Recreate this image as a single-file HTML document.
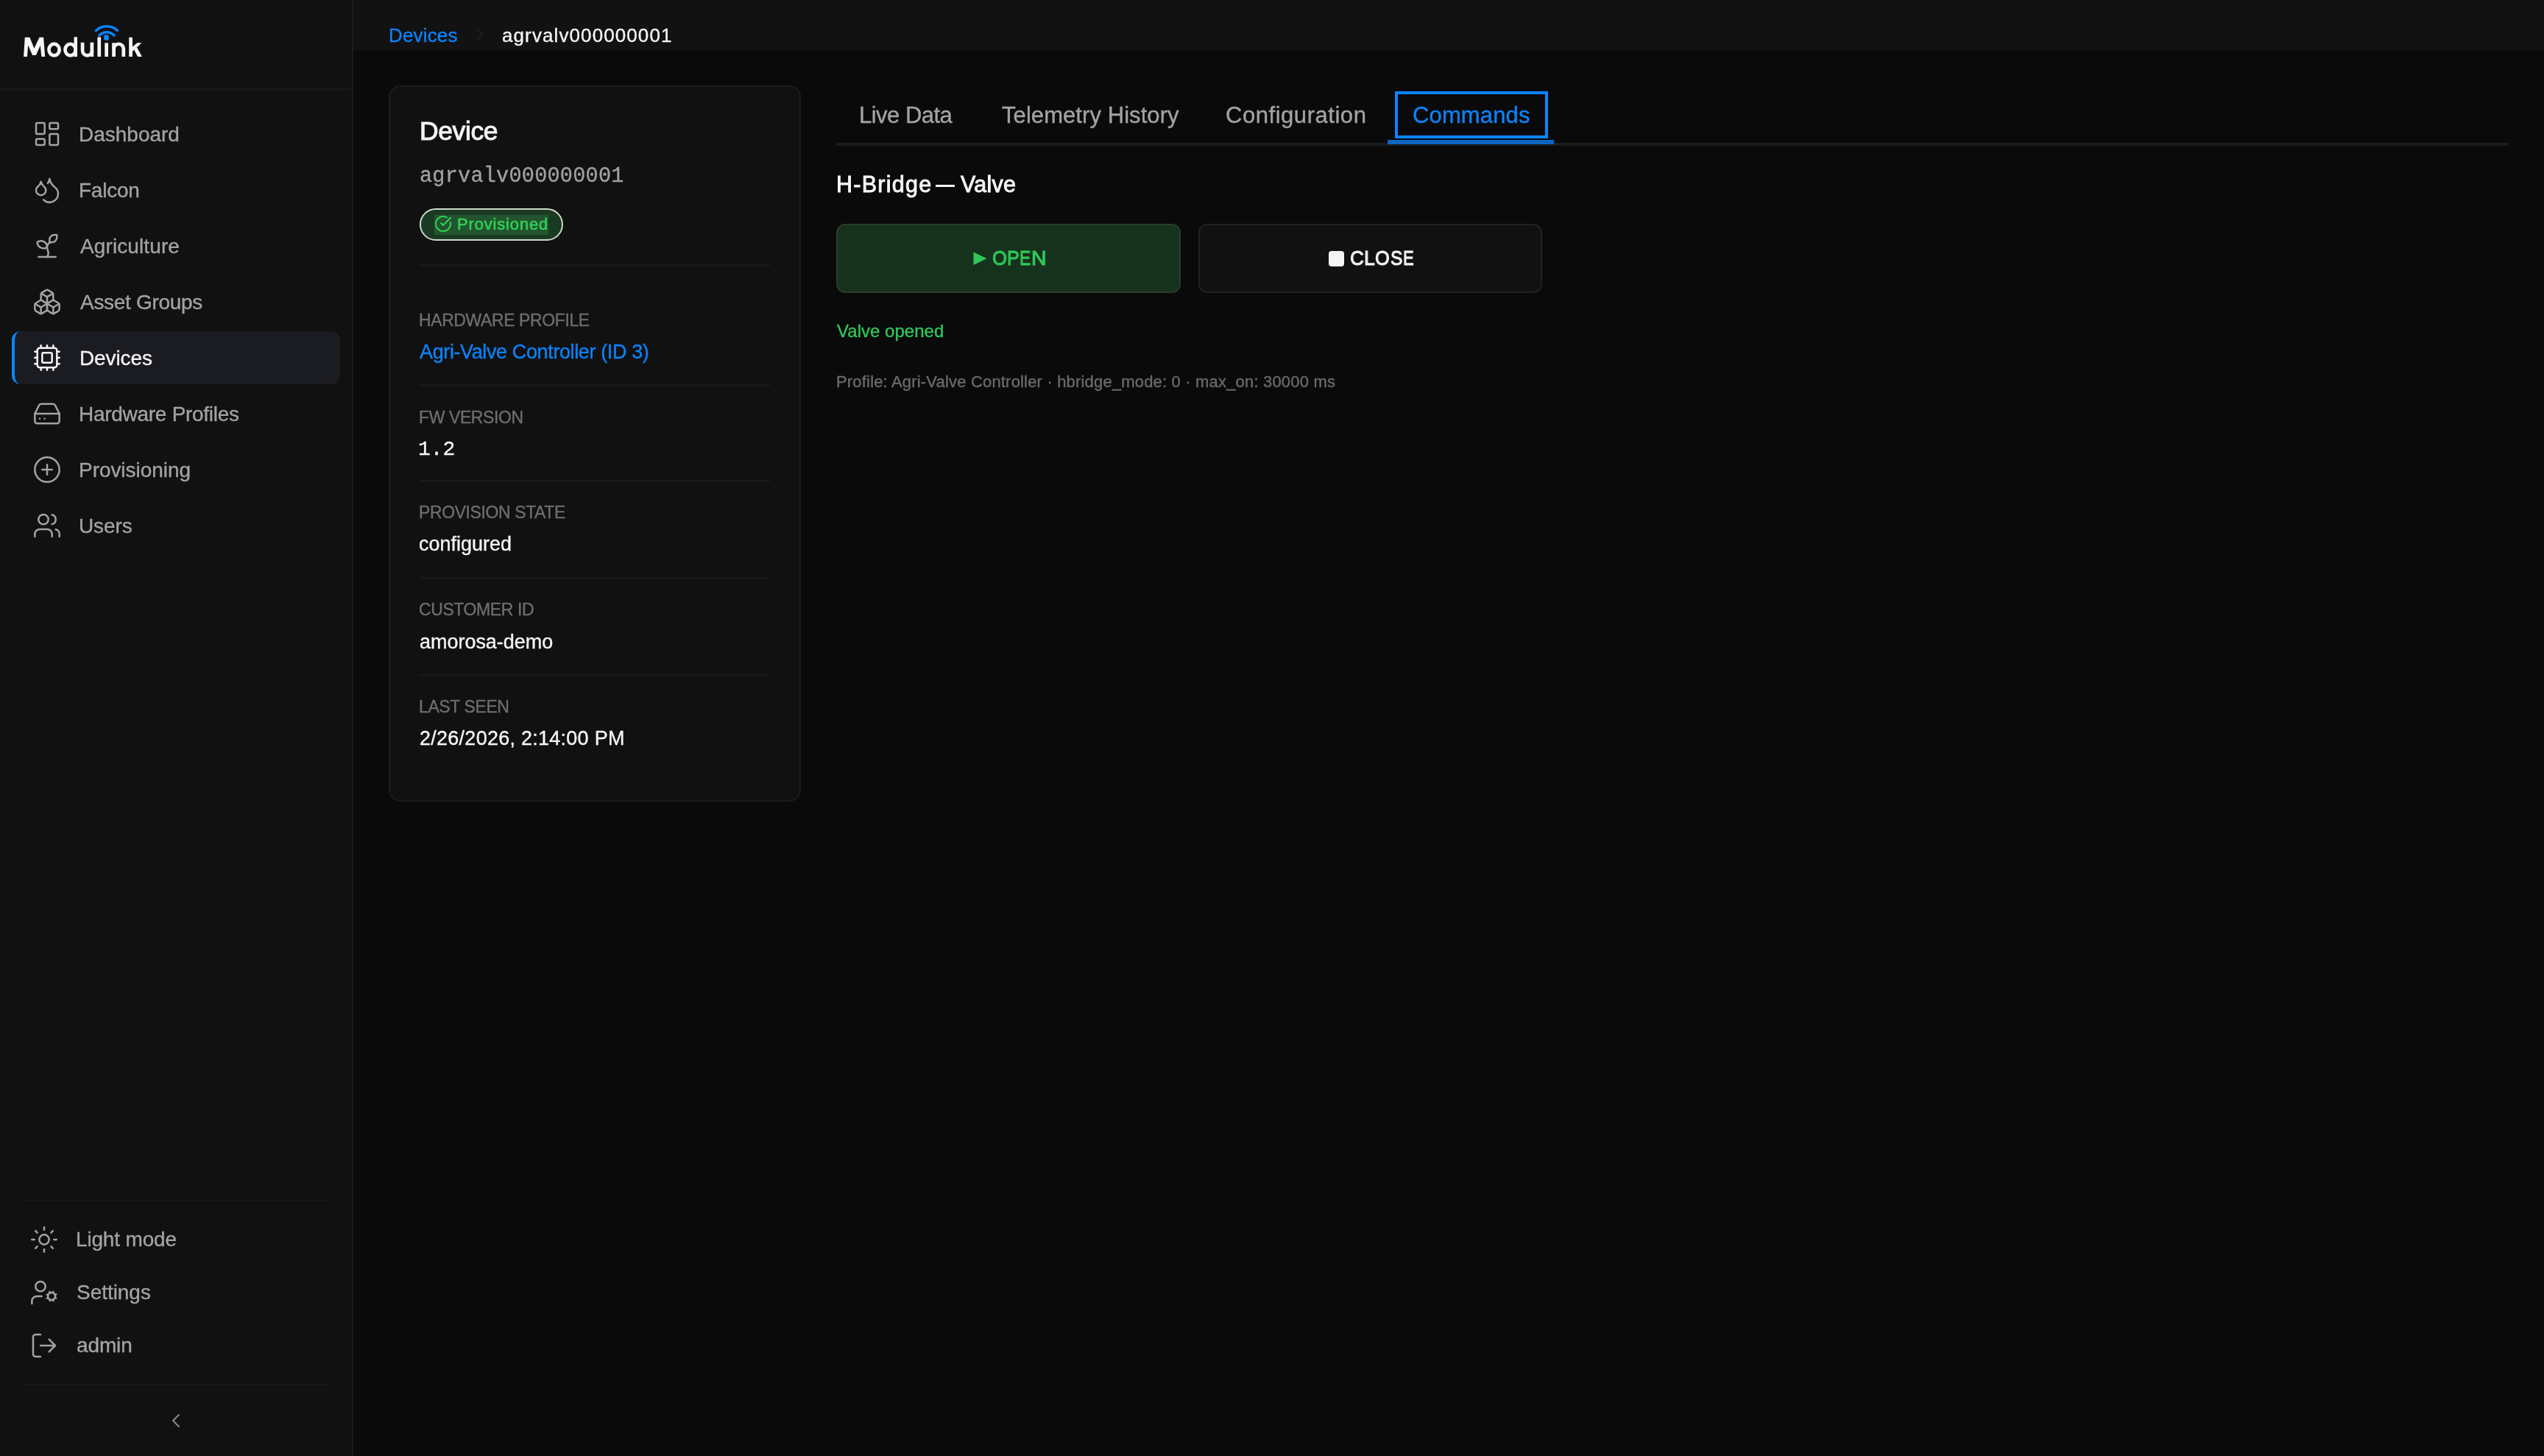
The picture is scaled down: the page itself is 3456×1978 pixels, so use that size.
<!DOCTYPE html>
<html><head><meta charset="utf-8">
<style>
*{box-sizing:border-box;margin:0;padding:0}
html,body{width:3456px;height:1978px;overflow:hidden;background:#0a0a0a;font-family:"Liberation Sans",sans-serif}
.abs{position:absolute}
.t{position:absolute;white-space:nowrap;line-height:1;will-change:transform;-webkit-text-stroke:0.35px currentColor}
</style></head>
<body>
<div id="root" style="position:absolute;left:0;top:0;width:3456px;height:1978px;overflow:hidden;background:#0a0a0a">
<div class="abs" style="left:0px;top:0px;width:478px;height:1978px;background:#111111;"></div>
<div class="abs" style="left:478px;top:0px;width:2px;height:1978px;background:#191b1f;"></div>
<div class="abs" style="left:480px;top:0px;width:2976px;height:68px;background:#121212;"></div>
<svg class="abs" style="left:0;top:0" width="220" height="100" viewBox="0 0 220 100"><g fill="#f5f5f5"><polygon points="32.1,77 33.8,50.8 40.4,50.8 46.4,65.8 53.5,50.8 59.1,50.8 61.2,77 56.3,77 54.8,61.8 48.9,75.1 44.1,75.1 38.1,61.6 37,77"/><rect x="100.5" y="50.3" width="4.5" height="26.8"/><rect x="132.4" y="50.5" width="4.7" height="26.5"/><rect x="142.3" y="58.3" width="4.7" height="18.7"/><rect x="152.2" y="58.3" width="4.8" height="18.7"/><rect x="175.2" y="50.8" width="4.8" height="26.2"/><polygon points="179.5,64 186.3,58.3 192.6,58.3 179.5,70.3"/><polygon points="182.2,67.6 185.8,63.9 193,77 187,77"/></g><g fill="none" stroke="#f5f5f5" stroke-width="4.7"><ellipse cx="73.55" cy="67.55" rx="7.1" ry="7.85"/><ellipse cx="95.6" cy="67.6" rx="7.1" ry="7.85"/><path d="M112.1 57.7 V68.9 A6.4 6.4 0 0 0 124.9 68.9"/><path d="M124.9 57.7 V77"/><path d="M154.6 66.5 A6.6 6.75 0 0 1 167.8 66.5 V77"/></g></svg>
<svg class="abs" style="left:124px;top:31.8px" width="42" height="32" viewBox="0 0 42 32" fill="none" stroke="#0a84ff" stroke-width="3.5" stroke-linecap="round"><path d="M6.5 9.5 A 21 21 0 0 1 35.5 9.5"/><path d="M11 16 A 14 14 0 0 1 31 16"/></svg>
<div class="abs" style="left:140.7px;top:47.3px;width:7.8px;height:7.8px;background:#0a84ff;border-radius:50%"></div>
<div class="abs" style="left:0px;top:120px;width:478px;height:2px;background:#17191c;"></div>
<svg class="abs" style="left:44.0px;top:162.0px" width="40" height="40" viewBox="0 0 24 24" fill="none" stroke="#a3a3a3" stroke-width="1.5" stroke-linecap="round" stroke-linejoin="round"><rect width="7" height="9" x="3" y="3" rx="1"/><rect width="7" height="5" x="14" y="3" rx="1"/><rect width="7" height="9" x="14" y="12" rx="1"/><rect width="7" height="5" x="3" y="16" rx="1"/></svg>
<div class="t" style="left:107.0px;top:168.7px;font-size:28px;color:#a3a3a3;font-weight:normal;font-family:'Liberation Sans';letter-spacing:-0.01px;">Dashboard</div>
<svg class="abs" style="left:44.0px;top:238.0px" width="40" height="40" viewBox="0 0 24 24" fill="none" stroke="#a3a3a3" stroke-width="1.5" stroke-linecap="round" stroke-linejoin="round"><path d="M7 16.3c2.2 0 4-1.83 4-4.05 0-1.16-.57-2.26-1.71-3.19S7.29 6.75 7 5.3c-.29 1.45-1.14 2.84-2.290 3.76S3 11.1 3 12.25c0 2.22 1.8 4.05 4 4.05z"/><path d="M12.56 6.6A10.97 10.97 0 0 0 14 3.02c.5 2.5 2 4.9 4 6.5s3 3.5 3 5.5a6.98 6.98 0 0 1-11.91 4.97"/></svg>
<div class="t" style="left:107.0px;top:244.7px;font-size:28px;color:#a3a3a3;font-weight:normal;font-family:'Liberation Sans';letter-spacing:-0.25px;">Falcon</div>
<svg class="abs" style="left:44.0px;top:314.0px" width="40" height="40" viewBox="0 0 24 24" fill="none" stroke="#a3a3a3" stroke-width="1.5" stroke-linecap="round" stroke-linejoin="round"><path d="M14 9.536V7a4 4 0 0 1 4-4h1.5a.5.5 0 0 1 .5.5V5a4 4 0 0 1-4 4 4 4 0 0 0-4 4c0 2 1 3 1 5a5 5 0 0 1-1 3"/><path d="M4 9a5 5 0 0 1 8 4 5 5 0 0 1-8-4"/><path d="M5 21h14"/></svg>
<div class="t" style="left:108.5px;top:320.7px;font-size:28px;color:#a3a3a3;font-weight:normal;font-family:'Liberation Sans';letter-spacing:0.11px;">Agriculture</div>
<svg class="abs" style="left:44.0px;top:390.0px" width="40" height="40" viewBox="0 0 24 24" fill="none" stroke="#a3a3a3" stroke-width="1.5" stroke-linecap="round" stroke-linejoin="round"><path d="M2.97 12.92A2 2 0 0 0 2 14.63v3.24a2 2 0 0 0 .97 1.71l3 1.8a2 2 0 0 0 2.06 0L12 19v-5.5l-5-3-4.03 2.42Z"/><path d="m7 16.5-4.74-2.85"/><path d="m7 16.5 5-3"/><path d="M7 16.5v5.17"/><path d="M12 13.5V19l3.97 2.38a2 2 0 0 0 2.06 0l3-1.8a2 2 0 0 0 .97-1.71v-3.24a2 2 0 0 0-.97-1.71L17 10.5l-5 3Z"/><path d="m17 16.5-5-3"/><path d="m17 16.5 4.74-2.85"/><path d="M17 16.5v5.17"/><path d="M7.97 4.42A2 2 0 0 0 7 6.13v4.37l5 3 5-3V6.13a2 2 0 0 0-.97-1.71l-3-1.8a2 2 0 0 0-2.06 0l-3 1.8Z"/><path d="M12 8 7.26 5.150"/><path d="m12 8 4.74-2.85"/><path d="M12 13.5V8"/></svg>
<div class="t" style="left:108.5px;top:396.7px;font-size:28px;color:#a3a3a3;font-weight:normal;font-family:'Liberation Sans';letter-spacing:-0.30px;">Asset Groups</div>
<div class="abs" style="left:16px;top:450px;width:446px;height:72px;background:#1a1c21;border-radius:12px;border-left:4px solid #0a84ff"></div>
<svg class="abs" style="left:44.0px;top:466.0px" width="40" height="40" viewBox="0 0 24 24" fill="none" stroke="#f5f5f5" stroke-width="1.5" stroke-linecap="round" stroke-linejoin="round"><rect width="16" height="16" x="4" y="4" rx="2"/><rect width="8" height="8" x="8" y="8" rx="1"/><path d="M12 2v2"/><path d="M12 20v2"/><path d="M7 2v2"/><path d="M17 2v2"/><path d="M7 20v2"/><path d="M17 20v2"/><path d="M2 12h2"/><path d="M2 7h2"/><path d="M2 17h2"/><path d="M20 12h2"/><path d="M20 7h2"/><path d="M20 17h2"/></svg>
<div class="t" style="left:107.5px;top:472.7px;font-size:28px;color:#f5f5f5;font-weight:normal;font-family:'Liberation Sans';letter-spacing:-0.10px;">Devices</div>
<svg class="abs" style="left:44.0px;top:542.0px" width="40" height="40" viewBox="0 0 24 24" fill="none" stroke="#a3a3a3" stroke-width="1.5" stroke-linecap="round" stroke-linejoin="round"><line x1="22" x2="2" y1="12" y2="12"/><path d="M5.45 5.11 2 12v6a2 2 0 0 0 2 2h16a2 2 0 0 0 2-2v-6l-3.45-6.89A2 2 0 0 0 16.76 4H7.24a2 2 0 0 0-1.79 1.11z"/><line x1="6" x2="6.01" y1="16" y2="16"/><line x1="10" x2="10.01" y1="16" y2="16"/></svg>
<div class="t" style="left:107.0px;top:548.7px;font-size:28px;color:#a3a3a3;font-weight:normal;font-family:'Liberation Sans';letter-spacing:-0.28px;">Hardware Profiles</div>
<svg class="abs" style="left:44.0px;top:618.0px" width="40" height="40" viewBox="0 0 24 24" fill="none" stroke="#a3a3a3" stroke-width="1.5" stroke-linecap="round" stroke-linejoin="round"><circle cx="12" cy="12" r="10"/><path d="M8 12h8"/><path d="M12 8v8"/></svg>
<div class="t" style="left:107.0px;top:624.7px;font-size:28px;color:#a3a3a3;font-weight:normal;font-family:'Liberation Sans';letter-spacing:-0.05px;">Provisioning</div>
<svg class="abs" style="left:44.0px;top:694.0px" width="40" height="40" viewBox="0 0 24 24" fill="none" stroke="#a3a3a3" stroke-width="1.5" stroke-linecap="round" stroke-linejoin="round"><path d="M16 21v-2a4 4 0 0 0-4-4H6a4 4 0 0 0-4 4v2"/><circle cx="9" cy="7" r="4"/><path d="M22 21v-2a4 4 0 0 0-3-3.87"/><path d="M16 3.13a4 4 0 0 1 0 7.75"/></svg>
<div class="t" style="left:107.3px;top:700.7px;font-size:28px;color:#a3a3a3;font-weight:normal;font-family:'Liberation Sans';letter-spacing:-0.10px;">Users</div>
<div class="abs" style="left:32px;top:1630px;width:414px;height:2px;background:#17191c;"></div>
<svg class="abs" style="left:40.0px;top:1664.0px" width="40" height="40" viewBox="0 0 24 24" fill="none" stroke="#a3a3a3" stroke-width="1.5" stroke-linecap="round" stroke-linejoin="round"><circle cx="12" cy="12" r="4"/><path d="M12 2v2"/><path d="M12 20v2"/><path d="m4.93 4.93 1.41 1.41"/><path d="m17.66 17.66 1.41 1.41"/><path d="M2 12h2"/><path d="M20 12h2"/><path d="m6.34 17.66-1.41 1.41"/><path d="m19.07 4.93-1.41 1.41"/></svg>
<div class="t" style="left:102.8px;top:1669.8px;font-size:28px;color:#a3a3a3;font-weight:normal;font-family:'Liberation Sans';letter-spacing:-0.17px;">Light mode</div>
<svg class="abs" style="left:40.0px;top:1736.0px" width="40" height="40" viewBox="0 0 24 24" fill="none" stroke="#a3a3a3" stroke-width="1.5" stroke-linecap="round" stroke-linejoin="round"><circle cx="18" cy="15" r="3"/><circle cx="9" cy="7" r="4"/><path d="M10 15H6a4 4 0 0 0-4 4v2"/><path d="m21.7 16.4-.9-.3"/><path d="m15.2 13.9-.9-.3"/><path d="m16.6 18.7.3-.9"/><path d="m19.1 12.2.3-.9"/><path d="m19.6 18.7-.4-1"/><path d="m16.8 12.3-.4-1"/><path d="m14.3 16.6 1-.4"/><path d="m20.7 13.8 1-.4"/></svg>
<div class="t" style="left:103.8px;top:1741.8px;font-size:28px;color:#a3a3a3;font-weight:normal;font-family:'Liberation Sans';letter-spacing:-0.04px;">Settings</div>
<svg class="abs" style="left:40.0px;top:1808.0px" width="40" height="40" viewBox="0 0 24 24" fill="none" stroke="#a3a3a3" stroke-width="1.5" stroke-linecap="round" stroke-linejoin="round"><path d="M9 21H5a2 2 0 0 1-2-2V5a2 2 0 0 1 2-2h4"/><polyline points="16 17 21 12 16 7"/><line x1="21" x2="9" y1="12" y2="12"/></svg>
<div class="t" style="left:103.8px;top:1813.8px;font-size:28px;color:#a3a3a3;font-weight:normal;font-family:'Liberation Sans';letter-spacing:-0.12px;">admin</div>
<div class="abs" style="left:32px;top:1880px;width:414px;height:2px;background:#17191c;"></div>
<svg class="abs" style="left:223.0px;top:1914.0px" width="32" height="32" viewBox="0 0 24 24" fill="none" stroke="#8a8a8a" stroke-width="1.5" stroke-linecap="round" stroke-linejoin="round"><path d="m15 18-6-6 6-6"/></svg>
<div class="t" style="left:527.5px;top:34.5px;font-size:26px;color:#0a84ff;font-weight:normal;font-family:'Liberation Sans';letter-spacing:0.17px;">Devices</div>
<svg class="abs" style="left:638.0px;top:33.0px" width="28" height="28" viewBox="0 0 24 24" fill="none" stroke="#222428" stroke-width="1.5" stroke-linecap="round" stroke-linejoin="round"><path d="m9 18 6-6-6-6"/></svg>
<div class="t" style="left:681.5px;top:34.5px;font-size:26px;color:#f5f5f5;font-weight:normal;font-family:'Liberation Sans';letter-spacing:1.10px;">agrvalv000000001</div>
<div class="abs" style="left:528px;top:116px;width:560px;height:973px;background:#111111;border:2px solid #1a1d21;border-radius:16px"></div>
<div class="t" style="left:570.2px;top:161.4px;font-size:35.5px;color:#f5f5f5;font-weight:normal;font-family:'Liberation Sans';letter-spacing:-0.39px;-webkit-text-stroke:1px #f5f5f5">Device</div>
<div class="t" style="left:570.4px;top:226.3px;font-size:28.6px;color:#a0a0a0;font-weight:normal;font-family:'Liberation Mono';letter-spacing:0.19px;">agrvalv000000001</div>
<div class="abs" style="left:570px;top:283px;width:195px;height:44px;background:#1b3a23;border:2px solid #cfdcc9;border-radius:22px"></div>
<div class="abs" style="left:590px;top:292px;width:155px;height:27px;background:#22552f;"></div>
<svg class="abs" style="left:590.0px;top:292.0px" width="24" height="24" viewBox="0 0 24 24" fill="none" stroke="#30d158" stroke-width="2" stroke-linecap="round" stroke-linejoin="round"><path d="M21.801 10A10 10 0 1 1 17 3.335"/><path d="m9 11 3 3L22 4"/></svg>
<div class="t" style="left:621.3px;top:294.3px;font-size:22px;color:#30d158;font-weight:normal;font-family:'Liberation Sans';letter-spacing:0.83px;-webkit-text-stroke:0.6px #30d158">Provisioned</div>
<div class="abs" style="left:570px;top:359px;width:476px;height:2px;background:#181a1e;"></div>
<div class="t" style="left:569.2px;top:423.8px;font-size:23px;color:#6e6e6e;font-weight:normal;font-family:'Liberation Sans';letter-spacing:-0.40px;">HARDWARE PROFILE</div>
<div class="t" style="left:570.2px;top:465.4px;font-size:27px;color:#0a84ff;font-weight:normal;font-family:'Liberation Sans';letter-spacing:-0.38px;">Agri-Valve Controller (ID 3)</div>
<div class="abs" style="left:570px;top:522.4px;width:476px;height:2px;background:#181a1e;"></div>
<div class="t" style="left:569.2px;top:555.5px;font-size:23px;color:#6e6e6e;font-weight:normal;font-family:'Liberation Sans';letter-spacing:-0.40px;">FW VERSION</div>
<div class="t" style="left:568.2px;top:596.7px;font-size:28px;color:#f5f5f5;font-weight:normal;font-family:'Liberation Mono';letter-spacing:0.00px;">1.2</div>
<div class="abs" style="left:570px;top:651.7px;width:476px;height:2px;background:#181a1e;"></div>
<div class="t" style="left:569.2px;top:684.9px;font-size:23px;color:#6e6e6e;font-weight:normal;font-family:'Liberation Sans';letter-spacing:-0.40px;">PROVISION STATE</div>
<div class="t" style="left:569.2px;top:726.0px;font-size:27px;color:#f5f5f5;font-weight:normal;font-family:'Liberation Sans';letter-spacing:0.00px;">configured</div>
<div class="abs" style="left:570px;top:783.5px;width:476px;height:2px;background:#181a1e;"></div>
<div class="t" style="left:569.2px;top:816.5px;font-size:23px;color:#6e6e6e;font-weight:normal;font-family:'Liberation Sans';letter-spacing:-0.40px;">CUSTOMER ID</div>
<div class="t" style="left:569.5px;top:858.5px;font-size:27px;color:#f5f5f5;font-weight:normal;font-family:'Liberation Sans';letter-spacing:-0.03px;">amorosa-demo</div>
<div class="abs" style="left:570px;top:915.9px;width:476px;height:2px;background:#181a1e;"></div>
<div class="t" style="left:569.2px;top:948.5px;font-size:23px;color:#6e6e6e;font-weight:normal;font-family:'Liberation Sans';letter-spacing:-0.40px;">LAST SEEN</div>
<div class="t" style="left:569.5px;top:990.0px;font-size:27px;color:#f5f5f5;font-weight:normal;font-family:'Liberation Sans';letter-spacing:0.26px;">2/26/2026, 2:14:00 PM</div>
<div class="abs" style="left:1136px;top:194px;width:2272px;height:4px;background:#191c1f;"></div>
<div class="t" style="left:1167.4px;top:140.8px;font-size:31px;color:#a3a3a3;font-weight:normal;font-family:'Liberation Sans';letter-spacing:-0.52px;">Live Data</div>
<div class="t" style="left:1360.6px;top:140.8px;font-size:31px;color:#a3a3a3;font-weight:normal;font-family:'Liberation Sans';letter-spacing:0.07px;">Telemetry History</div>
<div class="t" style="left:1665.0px;top:140.8px;font-size:31px;color:#a3a3a3;font-weight:normal;font-family:'Liberation Sans';letter-spacing:0.54px;">Configuration</div>
<div class="t" style="left:1919.4px;top:140.8px;font-size:31px;color:#0a84ff;font-weight:normal;font-family:'Liberation Sans';letter-spacing:0.13px;">Commands</div>
<div class="abs" style="left:1895px;top:124px;width:208px;height:64px;border:4px solid #0a84ff"></div>
<div class="abs" style="left:1885px;top:190px;width:226px;height:6px;background:#0a64c2;"></div>
<div class="t" style="left:1135.7px;top:235.1px;font-size:30.5px;color:#f5f5f5;font-weight:normal;font-family:'Liberation Sans';letter-spacing:1.26px;-webkit-text-stroke:0.9px #f5f5f5">H-Bridge</div>
<div class="abs" style="left:1271px;top:250.6px;width:26.1px;height:3.0px;background:#f5f5f5;"></div>
<div class="t" style="left:1304.8px;top:235.1px;font-size:30.5px;color:#f5f5f5;font-weight:normal;font-family:'Liberation Sans';letter-spacing:0.26px;-webkit-text-stroke:0.9px #f5f5f5">Valve</div>
<div class="abs" style="left:1136px;top:304px;width:468px;height:94px;background:#16321c;border:2px solid #2a3a30;border-radius:12px"></div>
<div class="abs" style="left:1628px;top:304px;width:467px;height:94px;background:#111111;border:2px solid #1f2226;border-radius:12px"></div>
<svg class="abs" style="left:1322px;top:342px" width="19" height="19" viewBox="0 0 19 19"><path d="M0.5 0.5 L18.5 9.2 L0.5 18 Z" fill="#30c85a"/></svg>
<div class="t" style="left:1347.79px;top:337.2px;font-size:28px;color:#30c85a;font-weight:normal;font-family:'Liberation Sans';transform:scaleX(0.915);transform-origin:0 0;-webkit-text-stroke:1.1px #30c85a">O</div>
<div class="t" style="left:1368.11px;top:337.2px;font-size:28px;color:#30c85a;font-weight:normal;font-family:'Liberation Sans';transform:scaleX(0.894);transform-origin:0 0;-webkit-text-stroke:1.1px #30c85a">P</div>
<div class="t" style="left:1385.39px;top:337.2px;font-size:28px;color:#30c85a;font-weight:normal;font-family:'Liberation Sans';transform:scaleX(0.806);transform-origin:0 0;-webkit-text-stroke:1.1px #30c85a">E</div>
<div class="t" style="left:1400.86px;top:337.2px;font-size:28px;color:#30c85a;font-weight:normal;font-family:'Liberation Sans';transform:scaleX(1.019);transform-origin:0 0;-webkit-text-stroke:1.1px #30c85a">N</div>
<div class="abs" style="left:1805px;top:341px;width:21px;height:20.5px;background:#f5f5f5;border-radius:4px"></div>
<div class="t" style="left:1833.97px;top:337.2px;font-size:28px;color:#f5f5f5;font-weight:normal;font-family:'Liberation Sans';transform:scaleX(0.926);transform-origin:0 0;-webkit-text-stroke:1.1px #f5f5f5">C</div>
<div class="t" style="left:1853.29px;top:337.2px;font-size:28px;color:#f5f5f5;font-weight:normal;font-family:'Liberation Sans';transform:scaleX(0.954);transform-origin:0 0;-webkit-text-stroke:1.1px #f5f5f5">L</div>
<div class="t" style="left:1868.39px;top:337.2px;font-size:28px;color:#f5f5f5;font-weight:normal;font-family:'Liberation Sans';transform:scaleX(0.905);transform-origin:0 0;-webkit-text-stroke:1.1px #f5f5f5">O</div>
<div class="t" style="left:1889.02px;top:337.2px;font-size:28px;color:#f5f5f5;font-weight:normal;font-family:'Liberation Sans';transform:scaleX(0.876);transform-origin:0 0;-webkit-text-stroke:1.1px #f5f5f5">S</div>
<div class="t" style="left:1906.22px;top:337.2px;font-size:28px;color:#f5f5f5;font-weight:normal;font-family:'Liberation Sans';transform:scaleX(0.788);transform-origin:0 0;-webkit-text-stroke:1.1px #f5f5f5">E</div>
<div class="t" style="left:1137.0px;top:438.4px;font-size:24px;color:#30c85a;font-weight:normal;font-family:'Liberation Sans';letter-spacing:0.03px;">Valve opened</div>
<div class="t" style="left:1136.0px;top:508.3px;font-size:22px;color:#6b6b6b;font-weight:normal;font-family:'Liberation Sans';letter-spacing:0.18px;">Profile: Agri-Valve Controller &#183; hbridge_mode: 0 &#183; max_on: 30000 ms</div>
</div>
<script>
(function(){var w=window.innerWidth||3456;var s=w/3456;if(Math.abs(s-1)>0.002){var r=document.getElementById('root');r.style.transformOrigin='0 0';r.style.transform='scale('+s+')';}})();
</script>
</body></html>
